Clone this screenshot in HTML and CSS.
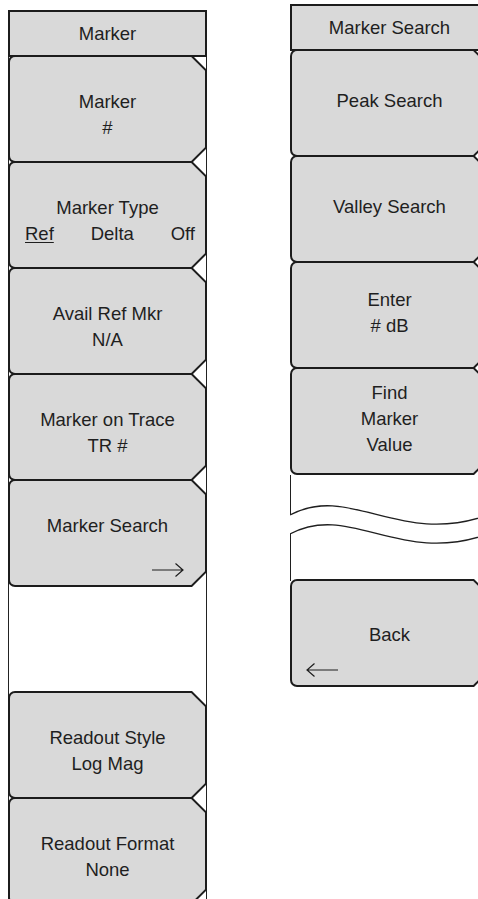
FILE: index.html
```html
<!DOCTYPE html>
<html lang="en">
<head>
<meta charset="utf-8">
<title>Marker menus</title>
<link rel="stylesheet" href="styles.css">
</head>
<body>
<div class="stage">
  <div class="panel panel-left">
    <div class="head">Marker</div>
    <div class="btn"><div class="face"><span>Marker</span><span>#</span></div></div>
    <div class="btn"><div class="face"><span>Marker Type</span><div class="opts"><span class="sel">Ref</span><span>Delta</span><span>Off</span></div></div></div>
    <div class="btn"><div class="face"><span>Avail Ref Mkr</span><span>N/A</span></div></div>
    <div class="btn"><div class="face"><span>Marker on Trace</span><span>TR #</span></div></div>
    <div class="btn"><div class="face"><span>Marker Search</span>
      <svg class="arrow arrow-r" width="32" height="16" viewBox="0 0 32 16"><path d="M0 8H31M23.5 1.5L31 8L23.5 14.5" fill="none" stroke="#1f1f1f" stroke-width="1.2"/></svg>
    </div></div>
    <div class="gap"></div>
    <div class="btn"><div class="face"><span>Readout Style</span><span>Log Mag</span></div></div>
    <div class="btn"><div class="face"><span>Readout Format</span><span>None</span></div></div>
  </div>

  <div class="panel panel-right">
    <div class="head">Marker Search</div>
    <div class="btn"><div class="face"><span>Peak Search</span></div></div>
    <div class="btn"><div class="face"><span>Valley Search</span></div></div>
    <div class="btn"><div class="face"><span>Enter</span><span># dB</span></div></div>
    <div class="btn"><div class="face"><span>Find</span><span>Marker</span><span>Value</span></div></div>
    <div class="gap gap-break">
      <svg class="break" width="198" height="106" viewBox="0 0 198 106">
        <path d="M0.5 0V40M0.5 59V106" fill="none" stroke="#1f1f1f" stroke-width="1"/>
        <path d="M0 40C60 8 110 72 198 40" fill="none" stroke="#1f1f1f" stroke-width="1.3"/>
        <path d="M0 59C60 27 110 91 198 59" fill="none" stroke="#1f1f1f" stroke-width="1.3"/>
      </svg>
    </div>
    <div class="btn"><div class="face face-back"><span>Back</span>
      <svg class="arrow arrow-l" width="32" height="16" viewBox="0 0 32 16"><path d="M32 8H1M8.5 1.5L1 8L8.5 14.5" fill="none" stroke="#1f1f1f" stroke-width="1.2"/></svg>
    </div></div>
  </div>
</div>
</body>
</html>
```

FILE: styles.css
```css
html, body {
  margin: 0;
  padding: 0;
  overflow: hidden;
  background: #ffffff;
}

body {
  font-family: "Liberation Sans", Arial, sans-serif;
  font-size: 18.5px;
  color: #1f1f1f;
}

.stage {
  display: flex;
  align-items: flex-start;
  gap: 83px;
  padding-left: 8px;
  width: max-content;
}

.panel {
  width: 199px;
  box-sizing: border-box;
  display: flex;
  flex-direction: column;
}

.panel-left {
  margin-top: 10px;
  border-left: 1px solid #222222;
  border-right: 1px solid #222222;
}

.panel-right {
  margin-top: 4px;
  border-right: 1px solid #222222;
}

.head {
  height: 47px;
  box-sizing: border-box;
  margin: 0 -1px;
  border: 2px solid #1c1c1c;
  background: #d9d9d9;
  display: flex;
  align-items: center;
  justify-content: center;
}

.panel-right .head {
  margin: 0 -1px 0 0;
}

.btn {
  height: 108px;
  box-sizing: border-box;
  margin: -2px -1px 0;
  padding: 2px;
  background: #1c1c1c;
  border-radius: 7px 0 0 7px;
  clip-path: polygon(0 0, calc(100% - 15px) 0, 100% 15px, 100% calc(100% - 15px), calc(100% - 15px) 100%, 0 100%);
  display: flex;
}

.panel-right .btn {
  margin: -2px -1px 0 0;
}

.face {
  flex: 1;
  box-sizing: border-box;
  background: #d9d9d9;
  border-radius: 5px 0 0 5px;
  clip-path: polygon(0 0, calc(100% - 13.8px) 0, 100% 13.8px, 100% calc(100% - 13.8px), calc(100% - 13.8px) 100%, 0 100%);
  display: flex;
  flex-direction: column;
  align-items: center;
  line-height: 26px;
  padding-top: 32px;
}

.panel-right .face {
  justify-content: center;
  padding: 0 0 4px;
}

.panel-right .face-back {
  justify-content: flex-start;
  padding: 41px 0 0;
}

.opts {
  align-self: stretch;
  display: flex;
  justify-content: space-between;
  padding: 0 10px 0 15px;
}

.sel {
  text-decoration: underline;
  text-underline-offset: 2px;
}

.arrow {
  display: block;
  margin-top: auto;
  margin-bottom: 7px;
}

.arrow-r {
  align-self: flex-end;
  margin-right: 21px;
}

.arrow-l {
  align-self: flex-start;
  margin-left: 14px;
}

.gap {
  height: 106px;
}

.break {
  display: block;
  width: 100%;
  height: 106px;
}
```
